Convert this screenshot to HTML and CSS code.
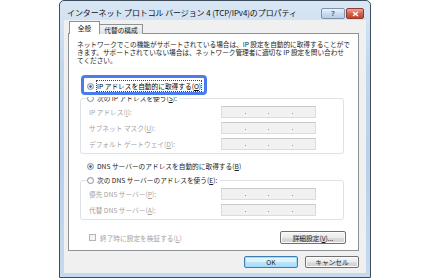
FILE: index.html
```html
<!DOCTYPE html>
<html lang="ja">
<head>
    <meta charset="UTF-8">
    <title>インターネット プロトコル バージョン 4 (TCP/IPv4)のプロパティ</title>
    <link rel="stylesheet" href="styles.css">
</head>
<body>
    <div class="window">
        <div class="titlebar">
            <span class="title">インターネット プロトコル バージョン 4 (TCP/IPv4)のプロパティ</span>
            <div class="caption-buttons">
                <span class="cap-btn help">?</span>
                <span class="cap-btn close">
                    <svg width="7" height="6" viewBox="0 0 7 6"><path d="M1 1 L6 5 M6 1 L1 5" stroke="#fff" stroke-width="1.4"/></svg>
                </span>
            </div>
        </div>
        <div class="client">
            <div class="tabs">
                <span class="tab active">全般</span>
                <span class="tab">代替の構成</span>
            </div>
            <div class="panel">
                <div class="intro">
                    <div>ネットワークでこの機能がサポートされている場合は、IP 設定を自動的に取得することがで</div>
                    <div>きます。サポートされていない場合は、ネットワーク管理者に適切な IP 設定を問い合わせ</div>
                    <div>てください。</div>
                </div>

                <div class="option focused">
                    <span class="focus-ring"></span>
                    <span class="radio checked"></span>
                    <span class="focus-text">IP アドレスを自動的に取得する(<u>O</u>)</span>
                </div>

                <div class="group">
                    <div class="legend"><span class="radio"></span>次の IP アドレスを使う(<u>S</u>):</div>
                    <div class="field-row">
                        <span class="label">IP アドレス(<u>I</u>):</span>
                        <span class="ip-field"><i></i><i></i><i></i></span>
                    </div>
                    <div class="field-row">
                        <span class="label">サブネット マスク(<u>U</u>):</span>
                        <span class="ip-field"><i></i><i></i><i></i></span>
                    </div>
                    <div class="field-row">
                        <span class="label">デフォルト ゲートウェイ(<u>D</u>):</span>
                        <span class="ip-field"><i></i><i></i><i></i></span>
                    </div>
                </div>

                <div class="option dns-auto">
                    <span class="radio checked"></span>
                    <span>DNS サーバーのアドレスを自動的に取得する(<u>B</u>)</span>
                </div>

                <div class="group dns-group">
                    <div class="legend"><span class="radio"></span>次の DNS サーバーのアドレスを使う(<u>E</u>):</div>
                    <div class="field-row">
                        <span class="label">優先 DNS サーバー(<u>P</u>):</span>
                        <span class="ip-field"><i></i><i></i><i></i></span>
                    </div>
                    <div class="field-row">
                        <span class="label">代替 DNS サーバー(<u>A</u>):</span>
                        <span class="ip-field"><i></i><i></i><i></i></span>
                    </div>
                </div>

                <div class="check-row">
                    <span class="checkbox"></span>
                    <span class="check-label">終了時に設定を検証する(<u>L</u>)</span>
                    <button class="btn advanced">詳細設定(<u>V</u>)...</button>
                </div>
            </div>
            <div class="footer">
                <button class="btn default">OK</button>
                <button class="btn">キャンセル</button>
            </div>
        </div>
    </div>
</body>
</html>
```

FILE: styles.css
```css
body {
    margin: 0;
    background: #fff;
    font-family: "Noto Sans CJK JP", "Noto Sans", sans-serif;
    font-size: 6.7px;
    color: #1b1b1b;
}
u {
    text-decoration-thickness: 1px;
    text-underline-offset: 1px;
}
.window {
    margin-left: 59px;
    width: 310px;
    height: 276px;
    border: 1px solid #3f4d5c;
    border-radius: 5px 5px 0 0;
    background: linear-gradient(#d9e7f5, #c0d6ed 25%, #b8d0ea 60%, #c6daef);
    display: flex;
    flex-direction: column;
}
.titlebar {
    height: 19px;
    display: flex;
    align-items: center;
    justify-content: space-between;
    padding: 0 6px 0 7px;
}
.title {
    font-size: 8px;
    color: #111;
    padding-top: 3px;
    letter-spacing: -0.1px;
}
.caption-buttons {
    display: flex;
    gap: 1px;
    align-self: flex-start;
    margin-top: 7px;
}
.cap-btn {
    height: 9px;
    border-radius: 2px;
    display: flex;
    align-items: center;
    justify-content: center;
    font-family: "DejaVu Sans", sans-serif;
    font-size: 7px;
    font-weight: bold;
}
.help {
    width: 22px;
    border: 1px solid #7b93ad;
    background: linear-gradient(#edf3f9, #cbdcee 50%, #b9cee5);
    color: #5d7690;
}
.close {
    width: 16px;
    border: 1px solid #8e3b30;
    background: linear-gradient(#e9a99c, #d5634d 50%, #c3442d);
}
.client {
    flex: 1;
    margin: 0 4px 4px 4px;
    background: #f0f0f0;
    padding: 0 7px 0 4px;
    display: flex;
    flex-direction: column;
}
.tabs {
    height: 14px;
    display: flex;
    align-items: flex-end;
    margin-bottom: -1px;
    padding-left: 1px;
    position: relative;
    z-index: 1;
}
.tab {
    height: 9px;
    padding: 0 4px;
    border: 1px solid #8d9297;
    border-bottom: none;
    background: linear-gradient(#f4f4f4, #e2e2e2);
    display: flex;
    align-items: center;
    white-space: nowrap;
}
.tab.active {
    height: 12px;
    width: 19px;
    background: #fff;
    justify-content: center;
    padding: 0 5px;
}
.tab + .tab {
    width: 34px;
    justify-content: center;
    border-left: none;
}
.panel {
    height: 216px;
    border: 1px solid #8d9297;
    background: #fff;
    padding: 0 7px 0 8px;
}
.intro {
    margin-top: 6px;
    line-height: 8px;
    letter-spacing: -0.05px;
}
.intro div {
    height: 8px;
    white-space: nowrap;
}
.option {
    display: flex;
    align-items: center;
    height: 10px;
    width: fit-content;
    margin-left: 10px;
    position: relative;
}
.focused {
    margin-top: 17px;
    z-index: 1;
}
.focus-ring {
    position: absolute;
    left: -6px;
    top: -6px;
    right: -6px;
    bottom: -4px;
    border: 3px solid #4a7cf0;
    border-radius: 4px;
    box-shadow: 0 0 0 2px #fff;
}
.focus-text {
    outline: 1px dotted #444;
    outline-offset: 0;
    color: #000;
}
.radio {
    width: 5px;
    height: 5px;
    border: 1px solid #8b8f94;
    border-radius: 50%;
    background: radial-gradient(circle at 50% 60%, #fff 30%, #dfe3e7);
    margin-right: 3px;
    flex-shrink: 0;
    display: inline-block;
}
.radio.checked {
    background: radial-gradient(circle, #1f5fb8 0, #3d86d8 30%, #e9f1fa 45%, #dfe6ee);
}
.group {
    margin: 7px 7px 0 3px;
    border: 1px solid #dce2e6;
    border-radius: 3px;
    padding: 0 0 3px 8px;
}
.legend {
    display: flex;
    align-items: center;
    height: 10px;
    margin: -6px 0 0 -2px;
    width: fit-content;
    padding: 0 3px 0 0;
    background: #fff;
    color: #1b1b1b;
}
.field-row {
    display: flex;
    align-items: center;
    margin-top: 4px;
}
.legend + .field-row {
    margin-top: 3px;
}
.label {
    width: 132px;
    color: #a3a3a3;
}
.ip-field {
    width: 93px;
    height: 10px;
    border: 1px solid #dcdcdc;
    border-top-color: #c9c9c9;
    background: #f1f1f1;
    display: flex;
    justify-content: space-evenly;
    align-items: center;
}
.ip-field i {
    width: 1px;
    height: 1px;
    background: #9a9a9a;
    margin-top: 2px;
}
.dns-auto {
    margin-top: 7px;
}
.dns-group {
    margin-top: 9px;
}
.check-row {
    display: flex;
    align-items: center;
    height: 13px;
    margin: 11px 5px 0 12px;
}
.checkbox {
    width: 5px;
    height: 5px;
    border: 1px solid #b5b5b5;
    background: #f4f4f4;
    margin-right: 4px;
}
.check-label {
    color: #a3a3a3;
    flex: 1;
}
.btn {
    font-family: inherit;
    font-size: 6.7px;
    color: #1b1b1b;
    width: 54px;
    height: 12px;
    padding: 0;
    border: 1px solid #707070;
    border-radius: 2px;
    background: linear-gradient(#f6f6f6, #ebebeb 50%, #dddddd 51%, #cfcfcf);
    box-shadow: inset 0 0 0 1px #fbfbfb;
}
.advanced {
    width: 66px;
    height: 13px;
}
.footer {
    display: flex;
    justify-content: flex-end;
    gap: 7px;
    padding-top: 5px;
}
.btn.default {
    border-color: #3c7fb1;
    background: linear-gradient(#eaf6fd, #d9f0fc 50%, #bee6fd 51%, #a7d9f5);
    box-shadow: inset 0 0 0 1px #9ddcfb;
}
```
